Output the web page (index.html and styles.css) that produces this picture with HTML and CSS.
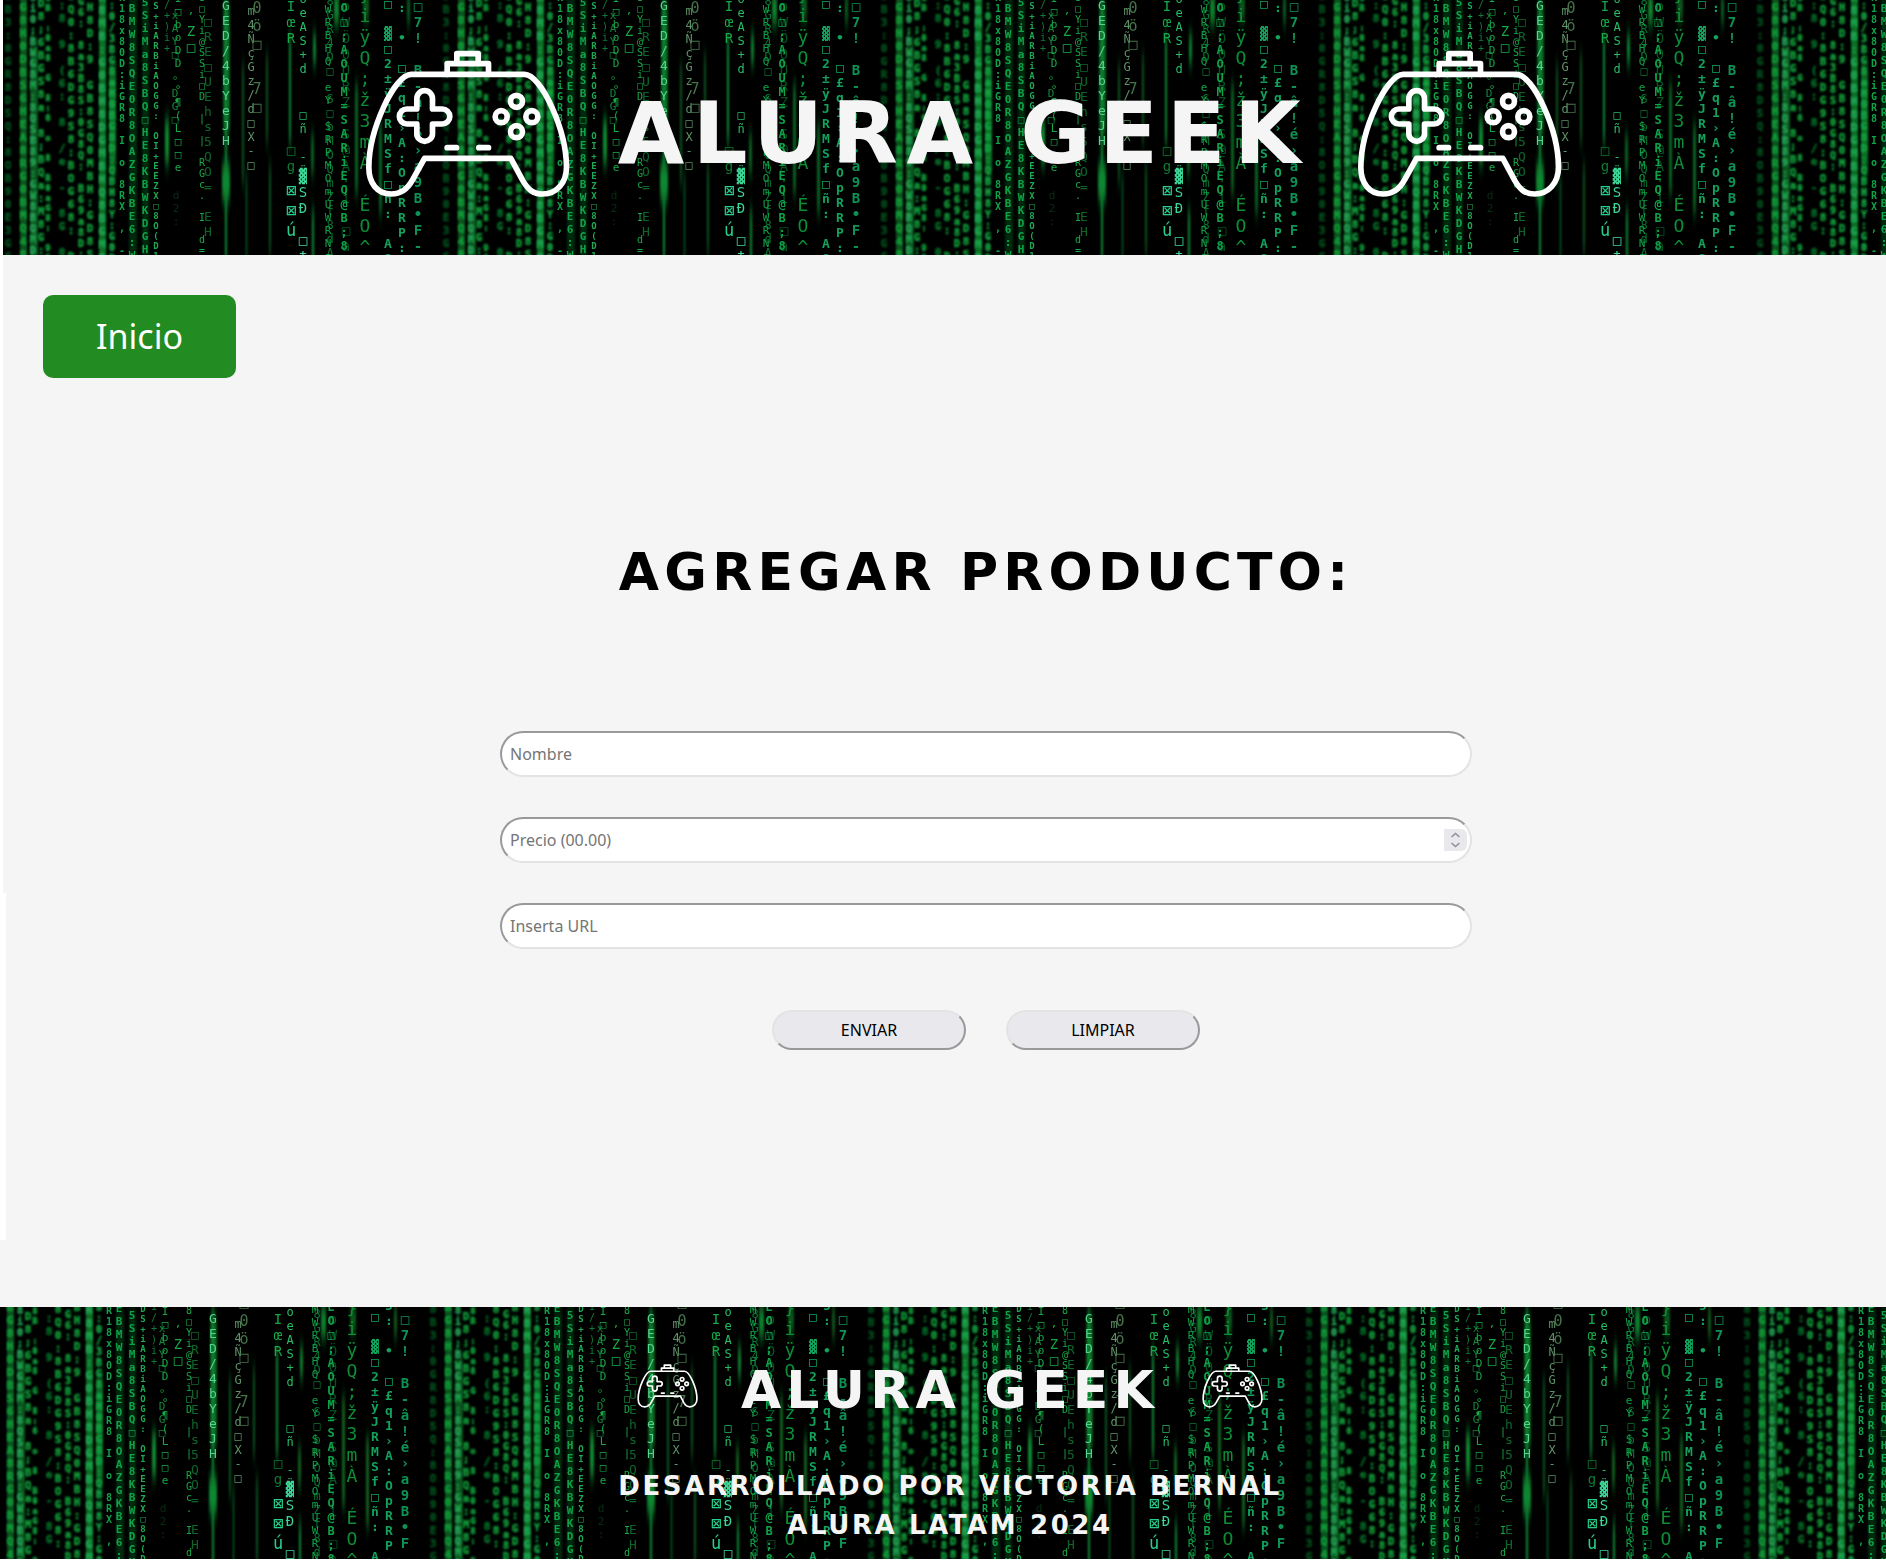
FILE: index.html
```html
<!DOCTYPE html>
<html lang="es">
<head>
  <meta charset="UTF-8">
  <meta name="viewport" content="width=device-width, initial-scale=1">
  <title>Alura Geek - Agregar producto</title>
  <link rel="stylesheet" href="styles.css">
</head>
<body>
  <svg class="sprite" aria-hidden="true">
    <symbol id="gamepad" viewBox="72 60 614 444">
      <g fill="none" stroke="currentColor" stroke-width="17" stroke-linecap="round" stroke-linejoin="round">
        <path d="M210 133H550C600 133 676 300 676 412C676 460 645 492 605 492C575 492 560 478 545 452L509 385H250L215 448C198 480 178 492 150 492C108 492 83 460 83 412C83 300 160 133 210 133Z"/>
        <path d="M318 133V101H442V133M347 101V71H411V101"/>
        <path d="M227 237V206a23.5 24 0 0 1 47 0V237H303a23 22.5 0 0 1 0 45H274V311a23.5 23 0 0 1-47 0V282H197a22.5 22.5 0 0 1 0-45Z"/>
        <circle cx="526" cy="214" r="18"/>
        <circle cx="480" cy="260" r="18"/>
        <circle cx="572" cy="260" r="18"/>
        <circle cx="526" cy="305" r="18"/>
        <path d="M318 353H346M413 353H442"/>
      </g>
    </symbol>
  </svg>

  <header class="header matrix">
    <svg class="header__icon" aria-hidden="true"><use href="#gamepad"/></svg>
    <h1 class="header__title pixel">ALURA GEEK</h1>
    <svg class="header__icon" aria-hidden="true"><use href="#gamepad"/></svg>
  </header>

  <main class="main">
    <nav class="nav">
      <a class="nav__link" href="#">Inicio</a>
    </nav>
    <section class="product">
      <h2 class="product__title pixel">AGREGAR PRODUCTO:</h2>
      <form class="form">
        <input class="form__input" type="text" placeholder="Nombre" aria-label="Nombre">
        <input class="form__input" type="number" step="0.01" placeholder="Precio (00.00)" aria-label="Precio">
        <input class="form__input" type="url" placeholder="Inserta URL" aria-label="Inserta URL">
        <div class="form__actions">
          <button class="form__button" type="submit">ENVIAR</button>
          <button class="form__button" type="reset">LIMPIAR</button>
        </div>
      </form>
    </section>
  </main>

  <footer class="footer matrix">
    <div class="footer__brand">
      <svg class="footer__icon" aria-hidden="true"><use href="#gamepad"/></svg>
      <h2 class="footer__title pixel">ALURA GEEK</h2>
      <svg class="footer__icon" aria-hidden="true"><use href="#gamepad"/></svg>
    </div>
    <p class="footer__text pixel">DESARROLLADO POR VICTORIA BERNAL</p>
    <p class="footer__text pixel">ALURA LATAM 2024</p>
  </footer>
</body>
</html>
```
FILE: styles.css
```css
@charset "UTF-8";

* {
  box-sizing: border-box;
}

body {
  margin: 0;
  background-color: #fff;
  font-family: "Noto Sans", Tahoma, sans-serif;
}

h1,
h2,
p {
  margin: 0;
}

.sprite {
  display: none;
}

.pixel {
  font-family: "DejaVu Sans", sans-serif;
  font-weight: bold;
  letter-spacing: 0.1em;
  text-transform: uppercase;
}

/* Digital rain in three repeating layers: sharp glyphs, soft glyphs, light streaks */
.matrix {
  color: #f5f5f5;
  background-color: #000;
  background-repeat: repeat;
  background-size: 438px 276px;
  background-image:
    url("data:image/svg+xml;charset=utf-8,<svg xmlns='http://www.w3.org/2000/svg' width='438' height='276' viewBox='0 0 438 276'><g fill='%2316a846' font-size='10' font-family='DejaVu Sans Mono' style='writing-mode:vertical-rl;text-orientation:upright;white-space:pre'><text x='165' y='-6' fill='%2311793a'>i/+)i+</text><text x='173' y='15' font-size='11' opacity='.8'>xAY□ °DG□</text><text x='176' y='-2' font-size='11'>I□boDD °¶(L□□e</text><text x='174' y='195' font-size='11' opacity='.25'>d2:</text><text x='189' y='10' font-size='11'>,</text><text x='189' y='29' font-size='14'>Z□</text><text x='200' y='-2' font-size='10'>8□Yi@SSi□D | | RGc. I d=</text><text x='206' y='20' font-size='13' opacity='.6'>□RE□UEhs5QO= EH</text><text x='224' y='4' font-size='13' fill='%2353d58f'>GED/4bYeJH</text><text x='249' y='10' font-size='12' fill='%235e9268'>m4ÑçGz/d□X-□</text><text x='255' y='-13' font-size='15' fill='%23447249'>□0ö□</text><text x='255' y='86' font-size='15' fill='%23447249'>7□</text><text x='289' y='4' font-size='14'>IœR</text><text x='289' y='148' font-size='14' fill='%230c7b30'>□g</text><text x='289' y='186' font-size='17' fill='%2326cf8b'>⊠⊠ú</text><text x='301' y='-2' font-size='12' fill='%2324bc65'>oeAS+d</text><text x='301' y='114' font-size='12' fill='%2324bc65'>□ñ -ÿ</text><text x='301' y='174' font-size='14' fill='%233bd698'>▓SĐ □‡</text></g></svg>"),
    url("data:image/svg+xml;charset=utf-8,<svg xmlns='http://www.w3.org/2000/svg' width='438' height='276' viewBox='0 0 438 276'><filter id='a' x='-50' y='-50' width='600' height='400' filterUnits='userSpaceOnUse'><feGaussianBlur stdDeviation='1.3'/></filter><filter id='b' x='-50' y='-50' width='600' height='400' filterUnits='userSpaceOnUse'><feGaussianBlur stdDeviation='0.7'/></filter><g font-family='DejaVu Sans Mono' style='writing-mode:vertical-rl;text-orientation:upright;white-space:pre'><g filter='url(%23a)' fill='%230c9c38' font-size='11' font-weight='bold' stroke='%230c9c38' stroke-width='.6'><text x='6' y='-4' opacity='.5'>8B3:0GR8D5Q:8OB90E3G6A4BH</text><text x='21' y='-6'>BG8H0DBS6HEA8RG0BMQ48DGHB</text><text x='31' y='-2' fill='%2341ad7b' font-size='10'>8i0;BWG8M:8QSB89:GW8BQMD0B9G8</text><text x='39' y='3'>D8;6BGS8a 8;BQa:M8G:D68aBG3S9</text><text x='46' y='-1' font-size='9'>8B :0a8 G 8:6 o   8 B0aG8: 9S o8G</text><text x='60' y='5' opacity='.7'>:8 9 (6: 8 /e - 8G 0 B:9 8:</text><text x='69' y='-4'>8Q0:8B6DG9S8:BOG68: DBQS89a8</text><text x='79' y='2' font-size='10'>G6: 8a3B8S:0G8Q: B69a8D:GS8B08</text><text x='88' y='-6'>BH8D:9 GB8SQ0MBH:GD8SB6H:Q8</text><text x='100' y='-3' fill='%2338b478'>H8MB:G0BH8DGMBHQ8BGM0DB8HGM</text><text x='110' y='-5' fill='%231fae50' font-size='10'>8:0/3BG8aH0BG8D:QBH8Y:G0B:S80a</text></g><g filter='url(%23b)' fill='%230ea348' font-size='10' font-weight='bold'><text x='120' y='-2'>R18x80D:iGR8 I o 8RX , - o x0□8:</text><text x='130' y='-5' font-size='11'>EBMW8SQE0R8OAZGKBE6:W8D0BA</text><text x='143' y='2' font-size='11'>5SiMa8SBQ□HE8KBWKDGHEiZ0Q□</text><text x='154' y='-3' font-size='9' fill='%231fa855'>DS+iARBiAOGG: OI+EEZX□8O(D1:</text><text x='326' y='-4' font-size='11' font-weight='normal'>MWRBHQ eY SRPMOmUWRNaAXdBI</text><text x='328' y='0' font-size='12' font-weight='normal' opacity='.7'>8GR4D□ S□bMOQmZf8dAzIb0</text><text x='342' y='-7' font-size='12'>EO□;AOUM=SARiEQ@B;80UW</text><text x='344' y='4' font-size='14' font-weight='normal' opacity='.5'>oWÖ0ÜRZ S@A:i □a 8O</text><text x='363' y='-10' font-size='18' font-weight='normal' fill='%230a8e36'>}iÿQ;ž3mÀ ÉO^4</text><text x='386' y='2' font-size='13' fill='%2312a25c'>□ ▓□2±ÿJRMSf□ñ: AS8</text><text x='400' y='-9' font-size='13' fill='%2312a25c'>5: • □£q1›A:OpRRP:S?</text><text x='416' y='4' font-size='14' fill='%230f9254'>□7! B-â!é›a9B•F-9</text></g></g></svg>"),
    url("data:image/svg+xml,<svg xmlns='http://www.w3.org/2000/svg' width='438' height='276' viewBox='0 0 438 276'><filter id='c' x='-50' y='-50' width='600' height='400' filterUnits='userSpaceOnUse'><feGaussianBlur stdDeviation='1.2 9'/></filter><g filter='url(%23c)' fill='%230b8a30'><rect x='18' y='-10' width='7' height='300' opacity='.6'/><rect x='28' y='50' width='8' height='230' opacity='.6'/><rect x='97' y='-10' width='7' height='300' opacity='.8'/><rect x='107' y='70' width='7' height='110' opacity='.8'/><rect x='127' y='0' width='8' height='276' opacity='.3'/><rect x='140' y='0' width='7' height='276' opacity='.3'/><rect x='163' y='125' width='4' height='45'/><rect x='221' y='10' width='7' height='130' opacity='.7'/><rect x='220' y='170' width='8' height='36'/><rect x='223' y='0' width='2' height='276'/><rect x='240' y='70' width='2' height='120' opacity='.6'/><rect x='244' y='180' width='1' height='90'/><rect x='264' y='60' width='2' height='90' opacity='.6'/><rect x='267' y='170' width='2' height='90' opacity='.6'/><rect x='287' y='40' width='2' height='110'/><rect x='311' y='40' width='3' height='30'/><rect x='309' y='140' width='3' height='40' opacity='.7'/><rect x='310' y='215' width='2' height='61'/><rect x='332' y='0' width='5' height='30'/><rect x='353' y='90' width='3' height='110' opacity='.7'/><rect x='361' y='0' width='6' height='25' opacity='.7'/><rect x='377' y='130' width='3' height='90' opacity='.7'/><rect x='405' y='0' width='3' height='30' opacity='.7'/></g></svg>");
}

.header {
  display: flex;
  justify-content: center;
  gap: 48px;
  margin-left: 3px;
  padding: 50px 0 57px 38px;
  background-position: -1px -6px;
}

.header__icon {
  flex: none;
  width: 205px;
  height: 148px;
  color: #fff;
}

.header__title {
  padding-top: 40px;
  font-size: 86px;
  line-height: 86px;
  white-space: nowrap;
}

/* Narrow white edge that widens beside the form */
.main {
  padding: 40px 0 257px;
  background:
    linear-gradient(#fff, #fff) 0 0 / 3px 638px no-repeat,
    linear-gradient(#fff, #fff) 0 638px / 6px 347px no-repeat,
    #f5f5f5;
}

.nav {
  display: flex;
  padding-left: 43px;
}

.nav__link {
  padding: 16px 53px;
  border-radius: 10px;
  background-color: #228b22;
  color: #fff;
  font-size: 34px;
  line-height: 51px;
  text-decoration: none;
}

.product {
  display: flex;
  flex-direction: column;
  align-items: center;
  padding-left: 86px;
}

.product__title {
  margin: 168px 0 133px;
  color: #000;
  font-size: 52px;
  line-height: 52px;
}

.form {
  display: flex;
  flex-direction: column;
  gap: 40px;
  width: 54%;
}

.form__input {
  width: 100%;
  height: 46px;
  padding: 0 3px 0 8px;
  border: 2px solid;
  border-color: #999 #e3e3e3 #e3e3e3 #999;
  border-radius: 23px;
  background-color: #fff;
  color: #000;
  font-family: inherit;
  font-size: 16px;
}

.form__input::placeholder {
  color: #757575;
}

.form__input::-webkit-inner-spin-button {
  appearance: none;
  width: 23px;
  height: 22px;
  border-radius: 0 6px 6px 0;
  opacity: 1;
  background: #e9e9ed url("data:image/svg+xml,<svg xmlns='http://www.w3.org/2000/svg' width='23' height='22' fill='none' stroke='%238f8f9d' stroke-width='1.6'><path d='M7.500 8L11.500 4.500L15.500 8M7.500 14L11.500 17.500L15.500 14'/></svg>") center no-repeat;
}

.form__actions {
  display: flex;
  justify-content: center;
  gap: 40px;
  padding-top: 21px;
}

.form__button {
  width: 194px;
  height: 40px;
  border: 2px solid;
  border-color: #e3e3e3 #999 #999 #e3e3e3;
  border-radius: 20px;
  background-color: #e9e9ed;
  color: #000;
  font-family: inherit;
  font-size: 16px;
}

.footer {
  display: flex;
  flex-direction: column;
  align-items: center;
  margin-bottom: 4px;
  padding: 57px 0 14px 14px;
  background-position: -11px 0;
}

.footer__brand {
  display: flex;
  gap: 43px;
  margin-bottom: 51px;
}

.footer__icon {
  flex: none;
  width: 61px;
  height: 44px;
  color: #fff;
}

.footer__title {
  font-size: 52px;
  line-height: 52px;
  white-space: nowrap;
}

.footer__text {
  font-size: 26px;
  line-height: 39px;
  text-align: center;
}
```
